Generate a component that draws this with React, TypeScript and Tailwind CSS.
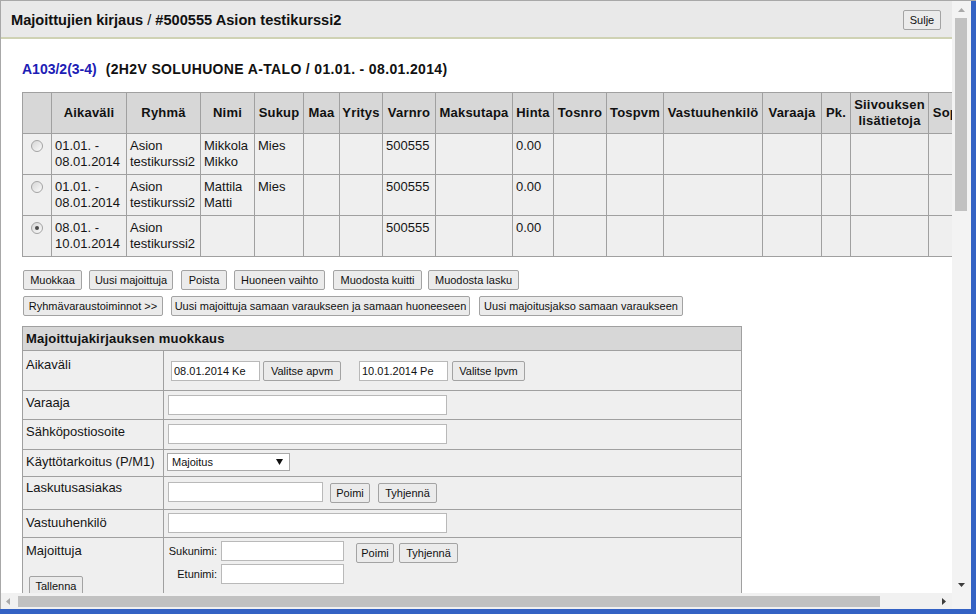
import React from "react";

function Btn({ children, w, className = "" }: { children: React.ReactNode; w: string; className?: string }) {
  return (
    <button
      type="button"
      className={`h-[20px] ${w} shrink-0 border border-[#a3a3a3] rounded-[2px] bg-[#ebebeb] text-[11px] leading-[18px] text-[#111] text-center whitespace-nowrap p-0 ${className}`}
    >
      {children}
    </button>
  );
}

function Radio({ checked }: { checked?: boolean }) {
  return (
    <div className="mx-auto w-[12px] h-[12px] rounded-full border border-[#a4a4a4] bg-linear-to-br from-[#d6d6d6] to-[#fbfbfb] flex items-center justify-center">
      {checked && <div className="w-[4px] h-[4px] rounded-full bg-[#4a4a4a]" />}
    </div>
  );
}

function Tri({ dir, color }: { dir: "up" | "down" | "left" | "right"; color: string }) {
  const pts =
    dir === "up" ? "0,4 7,4 3.5,0" : dir === "down" ? "0,0 7,0 3.5,4" : dir === "left" ? "4,0 4,7 0,3.5" : "0,0 0,7 4,3.5";
  const w = dir === "up" || dir === "down" ? 7 : 4;
  const h = dir === "up" || dir === "down" ? 4 : 7;
  return (
    <svg width={w} height={h} viewBox={`0 0 ${w} ${h}`}>
      <polygon points={pts} fill={color} />
    </svg>
  );
}

const TH = "border border-[#a0a0a0] bg-[#d7d7d7] h-[41px] text-[13px] leading-[16px] font-bold text-[#111] text-center align-middle p-0 whitespace-nowrap overflow-hidden tracking-[0.2px]";
const TD = "border border-[#a0a0a0] bg-[#efefef] align-top px-[3px] pt-[4px] pb-[4px] text-[13px] leading-[16px] text-[#151515] h-[41px] overflow-hidden whitespace-nowrap";

const headers: React.ReactNode[] = [
  "",
  "Aikaväli",
  "Ryhmä",
  "Nimi",
  "Sukup",
  "Maa",
  "Yritys",
  "Varnro",
  "Maksutapa",
  "Hinta",
  "Tosnro",
  "Tospvm",
  "Vastuuhenkilö",
  "Varaaja",
  "Pk.",
  <>Siivouksen<br />lisätietoja</>,
  "Sopimus",
];

type Row = { checked: boolean; date: [string, string]; name: [string, string] | null; sukup: string };
const rows: Row[] = [
  { checked: false, date: ["01.01. -", "08.01.2014"], name: ["Mikkola", "Mikko"], sukup: "Mies" },
  { checked: false, date: ["01.01. -", "08.01.2014"], name: ["Mattila", "Matti"], sukup: "Mies" },
  { checked: true, date: ["08.01. -", "10.01.2014"], name: null, sukup: "" },
];

const INPUT = "h-[20px] border border-[#b9b9b9] bg-white text-[11px] text-[#111] px-[2px] outline-none";

export default function App() {
  return (
    <div className="w-[976px] h-[614px] bg-[#3462c4] flex flex-col overflow-hidden font-['Liberation_Sans',Arial,sans-serif]">
      <div className="h-[609px] flex border-t border-l border-[#a8a8a8] shrink-0">
        {/* main column */}
        <div className="w-[951px] flex flex-col min-h-0">
          {/* title bar */}
          <div className="h-[36px] shrink-0 bg-[#e9e9e9] flex items-center justify-between pl-[10px] pr-[11px]">
            <div className="text-[14.6px] font-bold text-[#111] leading-[18px] mt-[1px] whitespace-nowrap">
              Majoittujien kirjaus <span className="font-normal">/</span> #500555 Asion testikurssi2
            </div>
            <Btn w="w-[38px]" className="mt-[2px]">Sulje</Btn>
          </div>
          <div className="h-[2px] shrink-0 bg-[#cfd2b4]" />
          {/* content */}
          <div className="flex-1 min-h-0 overflow-hidden bg-white pl-[21px] pt-[22px]">
            <div className="h-[16px] leading-[16px] text-[14px] font-bold whitespace-nowrap">
              <span className="text-[#1d1db5]">A103/2(3-4)</span>
              <span className="text-[#111] ml-[9px] tracking-[0.35px]">(2H2V SOLUHUONE A-TALO / 01.01. - 08.01.2014)</span>
            </div>

            <table className="mt-[15px] w-[971px] table-fixed border-collapse">
              <colgroup>
                <col className="w-[29px]" />
                <col className="w-[75px]" />
                <col className="w-[74px]" />
                <col className="w-[54px]" />
                <col className="w-[49px]" />
                <col className="w-[36px]" />
                <col className="w-[43px]" />
                <col className="w-[53px]" />
                <col className="w-[77px]" />
                <col className="w-[41px]" />
                <col className="w-[53px]" />
                <col className="w-[57px]" />
                <col className="w-[99px]" />
                <col className="w-[59px]" />
                <col className="w-[29px]" />
                <col className="w-[78px]" />
                <col className="w-[65px]" />
              </colgroup>
              <thead>
                <tr>
                  {headers.map((h, i) => (
                    <th key={i} className={TH}>
                      {h}
                    </th>
                  ))}
                </tr>
              </thead>
              <tbody>
                {rows.map((r, i) => (
                  <tr key={i}>
                    <td className={`${TD} pt-[6px]`}>
                      <Radio checked={r.checked} />
                    </td>
                    <td className={TD}>
                      {r.date[0]}
                      <br />
                      {r.date[1]}
                    </td>
                    <td className={TD}>
                      Asion
                      <br />
                      testikurssi2
                    </td>
                    <td className={TD}>
                      {r.name ? (
                        <>
                          {r.name[0]}
                          <br />
                          {r.name[1]}
                        </>
                      ) : null}
                    </td>
                    <td className={TD}>{r.sukup}</td>
                    <td className={TD}></td>
                    <td className={TD}></td>
                    <td className={TD}>500555</td>
                    <td className={TD}></td>
                    <td className={TD}>0.00</td>
                    <td className={TD}></td>
                    <td className={TD}></td>
                    <td className={TD}></td>
                    <td className={TD}></td>
                    <td className={TD}></td>
                    <td className={TD}></td>
                    <td className={TD}></td>
                  </tr>
                ))}
              </tbody>
            </table>

            {/* action buttons */}
            <div className="mt-[13px] ml-[1px] flex">
              <Btn w="w-[59px]">Muokkaa</Btn>
              <Btn w="w-[84px]" className="ml-[7px]">Uusi majoittuja</Btn>
              <Btn w="w-[46px]" className="ml-[8px]">Poista</Btn>
              <Btn w="w-[91px]" className="ml-[7px]">Huoneen vaihto</Btn>
              <Btn w="w-[89px]" className="ml-[8px]">Muodosta kuitti</Btn>
              <Btn w="w-[91px]" className="ml-[6px]">Muodosta lasku</Btn>
            </div>
            <div className="mt-[6px] ml-[1px] flex">
              <Btn w="w-[140px]">Ryhmävaraustoiminnot &gt;&gt;</Btn>
              <Btn w="w-[299px]" className="ml-[8px]">Uusi majoittuja samaan varaukseen ja samaan huoneeseen</Btn>
              <Btn w="w-[204px]" className="ml-[9px]">Uusi majoitusjakso samaan varaukseen</Btn>
            </div>

            {/* edit form */}
            <div className="mt-[10px] w-[720px] border border-[#a0a0a0] bg-[#efefef] text-[13px] text-[#151515]">
              <div className="h-[23px] bg-[#d7d7d7] pl-[3px] font-bold leading-[23px] text-[#111] tracking-[0.2px]">
                Majoittujakirjauksen muokkaus
              </div>

              <div className="h-[40px] flex border-t border-[#a0a0a0]">
                <div className="w-[141px] shrink-0 border-r border-[#a0a0a0] pl-[3px] pt-[6px] leading-[16px]">Aikaväli</div>
                <div className="flex-1 pl-[7px] pt-[10px] flex items-start">
                  <input className={`${INPUT} w-[89px]`} defaultValue="08.01.2014 Ke" />
                  <Btn w="w-[78px]" className="ml-[3px]">Valitse apvm</Btn>
                  <input className={`${INPUT} w-[89px] ml-[18px]`} defaultValue="10.01.2014 Pe" />
                  <Btn w="w-[73px]" className="ml-[4px]">Valitse lpvm</Btn>
                </div>
              </div>

              <div className="h-[29px] flex border-t border-[#a0a0a0]">
                <div className="w-[141px] shrink-0 border-r border-[#a0a0a0] pl-[3px] pt-[4px] leading-[16px]">Varaaja</div>
                <div className="flex-1 pl-[4px] pt-[4px]">
                  <input className={`${INPUT} w-[279px]`} defaultValue="" />
                </div>
              </div>

              <div className="h-[30px] flex border-t border-[#a0a0a0]">
                <div className="w-[141px] shrink-0 border-r border-[#a0a0a0] pl-[3px] pt-[4px] leading-[16px]">Sähköpostiosoite</div>
                <div className="flex-1 pl-[4px] pt-[4px]">
                  <input className={`${INPUT} w-[279px]`} defaultValue="" />
                </div>
              </div>

              <div className="h-[27px] flex border-t border-[#a0a0a0]">
                <div className="w-[141px] shrink-0 border-r border-[#a0a0a0] pl-[3px] pt-[4px] leading-[16px] whitespace-nowrap">Käyttötarkoitus (P/M1)</div>
                <div className="flex-1 pl-[3px] pt-[3px]">
                  <div className="w-[123px] h-[18px] border border-[#a9a9a9] bg-white flex items-center justify-between pl-[4px] pr-[6px] text-[11px] text-[#111]">
                    <span>Majoitus</span>
                    <svg width="7" height="6" viewBox="0 0 7 6">
                      <polygon points="0,0 7,0 3.5,6" fill="#111" />
                    </svg>
                  </div>
                </div>
              </div>

              <div className="h-[33px] flex border-t border-[#a0a0a0]">
                <div className="w-[141px] shrink-0 border-r border-[#a0a0a0] pl-[3px] pt-[3px] leading-[16px]">Laskutusasiakas</div>
                <div className="flex-1 pl-[4px] pt-[5px] flex items-start">
                  <input className={`${INPUT} w-[155px]`} defaultValue="" />
                  <Btn w="w-[40px]" className="ml-[7px] mt-[1px]">Poimi</Btn>
                  <Btn w="w-[59px]" className="ml-[8px] mt-[1px]">Tyhjennä</Btn>
                </div>
              </div>

              <div className="h-[28px] flex border-t border-[#a0a0a0]">
                <div className="w-[141px] shrink-0 border-r border-[#a0a0a0] pl-[3px] pt-[5px] leading-[16px]">Vastuuhenkilö</div>
                <div className="flex-1 pl-[4px] pt-[3px]">
                  <input className={`${INPUT} w-[279px]`} defaultValue="" />
                </div>
              </div>

              <div className="h-[90px] flex border-t border-[#a0a0a0]">
                <div className="w-[141px] shrink-0 border-r border-[#a0a0a0] pl-[3px] pt-[5px] leading-[16px]">
                  <div>Majoittuja</div>
                  <Btn w="w-[54px]" className="mt-[17px] ml-[3px]">Tallenna</Btn>
                </div>
                <div className="flex-1 pl-[4px] pt-[3px] flex items-start">
                  <div className="flex flex-col gap-[3px]">
                    <div className="flex items-center">
                      <span className="w-[49px] text-right text-[11px] text-[#111]">Sukunimi:</span>
                      <input className={`${INPUT} h-[19px] w-[123px] ml-[4px]`} defaultValue="" />
                    </div>
                    <div className="flex items-center">
                      <span className="w-[49px] text-right text-[11px] text-[#111]">Etunimi:</span>
                      <input className={`${INPUT} h-[19px] w-[123px] ml-[4px]`} defaultValue="" />
                    </div>
                  </div>
                  <Btn w="w-[38px]" className="ml-[12px] mt-[2px]">Poimi</Btn>
                  <Btn w="w-[59px]" className="ml-[5px] mt-[2px]">Tyhjennä</Btn>
                </div>
              </div>
            </div>
          </div>
          {/* horizontal scrollbar */}
          <div className="h-[16px] shrink-0 bg-[#f1f1f1] flex items-center">
            <div className="w-[13px] flex justify-center">
              <Tri dir="left" color="#a9a9a9" />
            </div>
            <div className="ml-[4px] w-[862px] h-[11px] bg-[#c1c1c1]" />
            <div className="flex-1" />
            <div className="w-[17px] flex justify-center">
              <Tri dir="right" color="#3d3d3d" />
            </div>
          </div>
        </div>
        {/* vertical scrollbar */}
        <div className="w-[19px] shrink-0 bg-[#f3f3f3] flex flex-col">
          <div className="h-[17px] flex items-center justify-center">
            <Tri dir="up" color="#a9a9a9" />
          </div>
          <div className="ml-[3px] w-[12px] h-[193px] bg-[#c1c1c1]" />
          <div className="flex-1" />
          <div className="h-[17px] flex items-center justify-center">
            <Tri dir="down" color="#3d3d3d" />
          </div>
          <div className="h-[16px]" />
        </div>
        <div className="flex-1" />
      </div>
    </div>
  );
}
